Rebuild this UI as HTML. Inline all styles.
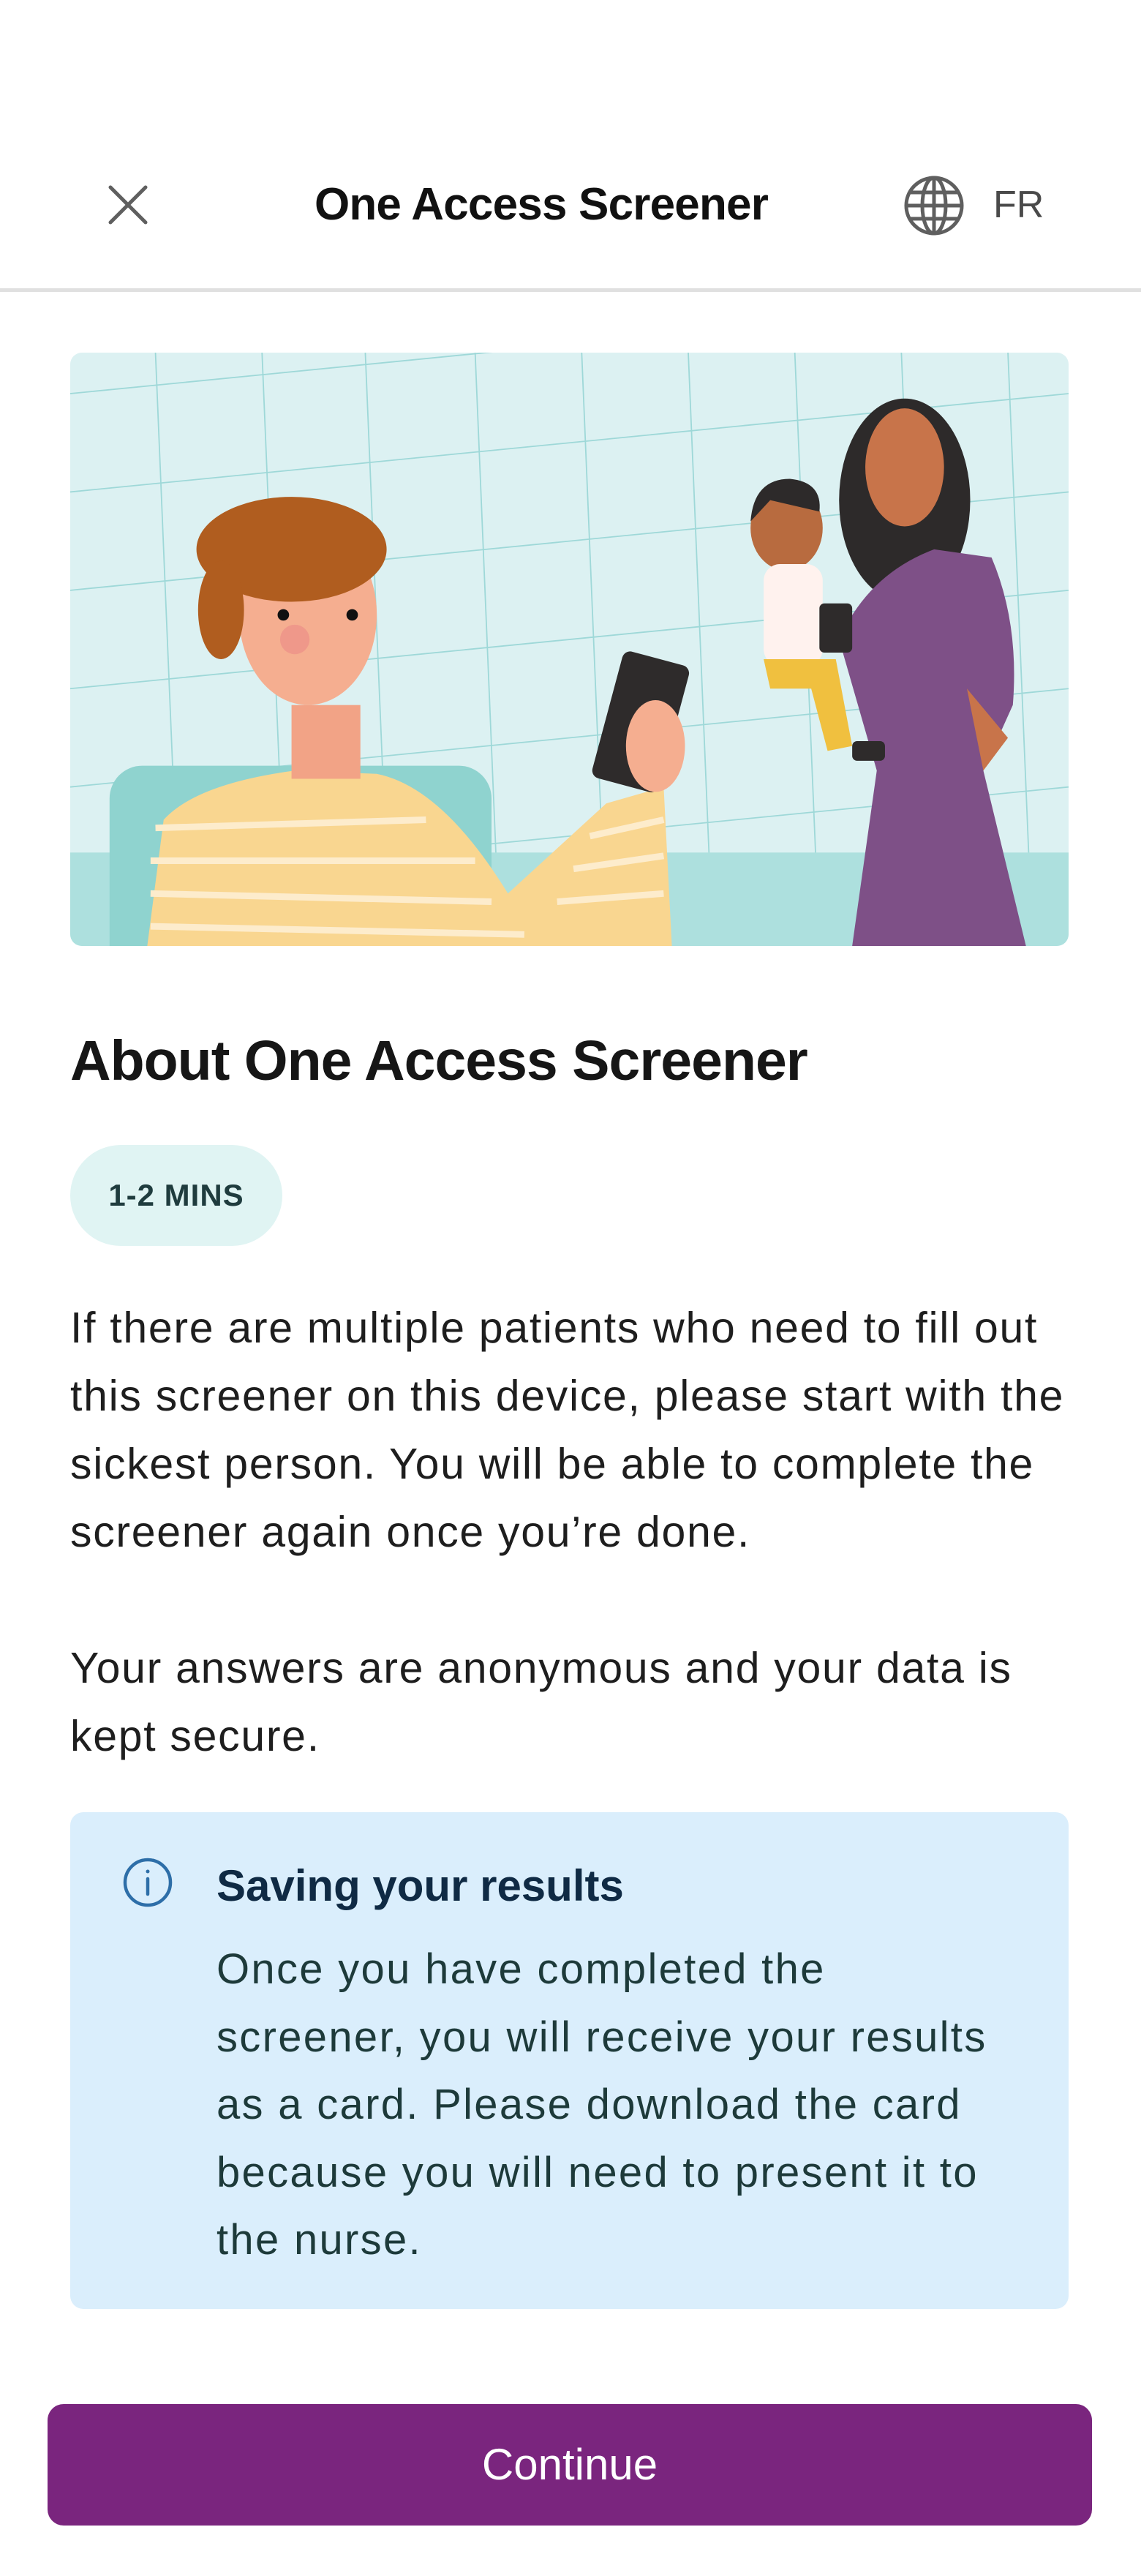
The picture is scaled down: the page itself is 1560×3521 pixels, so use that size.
<!DOCTYPE html>
<html><head><meta charset="utf-8">
<style>
*{margin:0;padding:0;box-sizing:border-box}
html,body{width:1560px;height:3521px;background:#fff;overflow:hidden}
body{position:relative;font-family:"Liberation Sans",sans-serif;color:#1a1a1a}
.abs{position:absolute;white-space:nowrap}
.p{font-size:59px;line-height:93px;color:#1e1e1e;letter-spacing:1.7px}
.ib{font-size:58px;line-height:92.5px;color:#1d3a3a;letter-spacing:2.3px}
</style></head><body>
<svg class="abs" style="left:145px;top:250px" width="60" height="60" viewBox="0 0 60 60"><path d="M6 6L54 54M54 6L6 54" stroke="#5f5f5f" stroke-width="5" stroke-linecap="round"/></svg>
<div class="abs" style="left:0;width:1480px;text-align:center;top:245px;font-size:62px;line-height:70px;font-weight:bold;color:#111;letter-spacing:-0.8px">One Access Screener</div>
<svg class="abs" style="left:1234px;top:238px" width="86" height="86" viewBox="0 0 86 86" fill="none" stroke="#5f5f5f" stroke-width="5"><circle cx="43" cy="43" r="38"/><ellipse cx="43" cy="43" rx="16" ry="38"/><path d="M5 43H81M10 25H76M10 61H76M43 5V81"/></svg>
<div class="abs" style="left:1358px;top:248px;font-size:52px;line-height:64px;color:#4a4a4a">FR</div>
<div class="abs" style="left:0;top:394px;width:1560px;height:5px;background:#e0e0e0"></div>

<div class="abs" style="left:96px;top:482px;width:1365px;height:811px;border-radius:16px;overflow:hidden">
<svg width="1365" height="811" viewBox="43 215 609 362" preserveAspectRatio="none">
<rect x="43" y="215" width="609" height="362" fill="#dcf1f2"/>
<g stroke="#9ed8d8" stroke-width="0.8" fill="none">
<path d="M95 215L110 577M160 215L175 577M223 215L238 577M290 215L305 577M355 215L370 577M420 215L435 577M485 215L500 577M550 215L565 577M615 215L630 577"/>
<path d="M43 240L652 180M43 300L652 240M43 360L652 300M43 420L652 360M43 480L652 420M43 540L652 480"/>
</g>
<rect x="43" y="520" width="609" height="57" fill="#ade0de"/>
<rect x="67" y="467" width="233" height="130" rx="20" fill="#8fd3cf"/>
<path d="M90 577L100 500Q120 478 180 470L230 472Q270 480 310 545L370 490L405 480L410 577Z" fill="#f9d690"/>
<g stroke="#fdeccc" stroke-width="4" fill="none"><path d="M95 505L260 500M92 525L290 525M92 545L300 550M92 565L320 570M360 510L405 500M350 530L405 522M340 550L405 545"/></g>
<rect x="178" y="430" width="42" height="45" fill="#f2a386"/>
<ellipse cx="188" cy="375" rx="42" ry="55" fill="#f5ae90"/>
<ellipse cx="178" cy="335" rx="58" ry="32" fill="#b05d1f"/>
<ellipse cx="135" cy="372" rx="14" ry="30" fill="#b05d1f"/>
<circle cx="173" cy="375" r="3.5" fill="#111"/><circle cx="215" cy="375" r="3.5" fill="#111"/>
<circle cx="180" cy="390" r="9" fill="#ec8f88" opacity=".7"/>
<g transform="rotate(15 390 440)"><rect x="370" y="400" width="42" height="80" rx="5" fill="#2e2b2b"/></g>
<ellipse cx="400" cy="455" rx="18" ry="28" fill="#f5ae90"/>
<ellipse cx="552" cy="305" rx="40" ry="62" fill="#2d2a2a"/>
<ellipse cx="552" cy="285" rx="24" ry="36" fill="#c8744a"/>
<path d="M520 577L535 470L512 390Q530 350 570 335L605 340Q622 380 618 430L600 470L626 577Z" fill="#7e5087"/>
<path d="M590 420L615 450L600 470Z" fill="#c8744a"/>
<ellipse cx="480" cy="322" rx="22" ry="26" fill="#b86b3f"/>
<path d="M458 318Q460 292 482 292Q502 294 500 312L470 305Z" fill="#2d2a2a"/>
<rect x="466" y="344" width="36" height="62" rx="10" fill="#fff2ee"/>
<path d="M466 402L510 402L520 455L505 458L495 420L470 420Z" fill="#f0c03f"/>
<rect x="500" y="368" width="20" height="30" rx="3" fill="#2e2b2b"/>
<rect x="520" y="452" width="20" height="12" rx="3" fill="#2e2b2b"/>
</svg></div>

<div class="abs" style="left:96px;top:1405px;font-size:77px;line-height:90px;font-weight:bold;color:#161616;letter-spacing:-1px">About One Access Screener</div>

<div class="abs" style="left:96px;top:1565px;width:290px;height:138px;border-radius:69px;background:#e0f4f3;text-align:center;line-height:138px;font-size:42px;font-weight:bold;color:#1f3c3e;letter-spacing:1px">1-2 MINS</div>

<div class="abs p" style="left:96px;top:1769px">If there are multiple patients who need to fill out<br>this screener on this device, please start with the<br>sickest person. You will be able to complete the<br>screener again once you’re done.</div>
<div class="abs p" style="left:96px;top:2234px">Your answers are anonymous and your data is<br>kept secure.</div>

<div class="abs" style="left:96px;top:2477px;width:1365px;height:679px;border-radius:18px;background:#daeefc"></div>
<svg class="abs" style="left:166px;top:2537px" width="72" height="72" viewBox="0 0 72 72" fill="none" stroke="#2d6ea8" stroke-width="4.5"><circle cx="36" cy="36" r="31"/><path d="M36 31V52" stroke-linecap="round"/><circle cx="36" cy="21" r="2.5" fill="#2d6ea8" stroke="none"/></svg>
<div class="abs" style="left:296px;top:2545px;font-size:60px;line-height:66px;font-weight:bold;color:#0f2a44;letter-spacing:0px">Saving your results</div>
<div class="abs ib" style="left:296px;top:2646px">Once you have completed the<br>screener, you will receive your results<br>as a card. Please download the card<br>because you will need to present it to<br>the nurse.</div>

<div class="abs" style="left:65px;top:3286px;width:1428px;height:166px;border-radius:22px;background:#7a257e;color:#fff;text-align:center;line-height:166px;font-size:60px">Continue</div>
</body></html>
